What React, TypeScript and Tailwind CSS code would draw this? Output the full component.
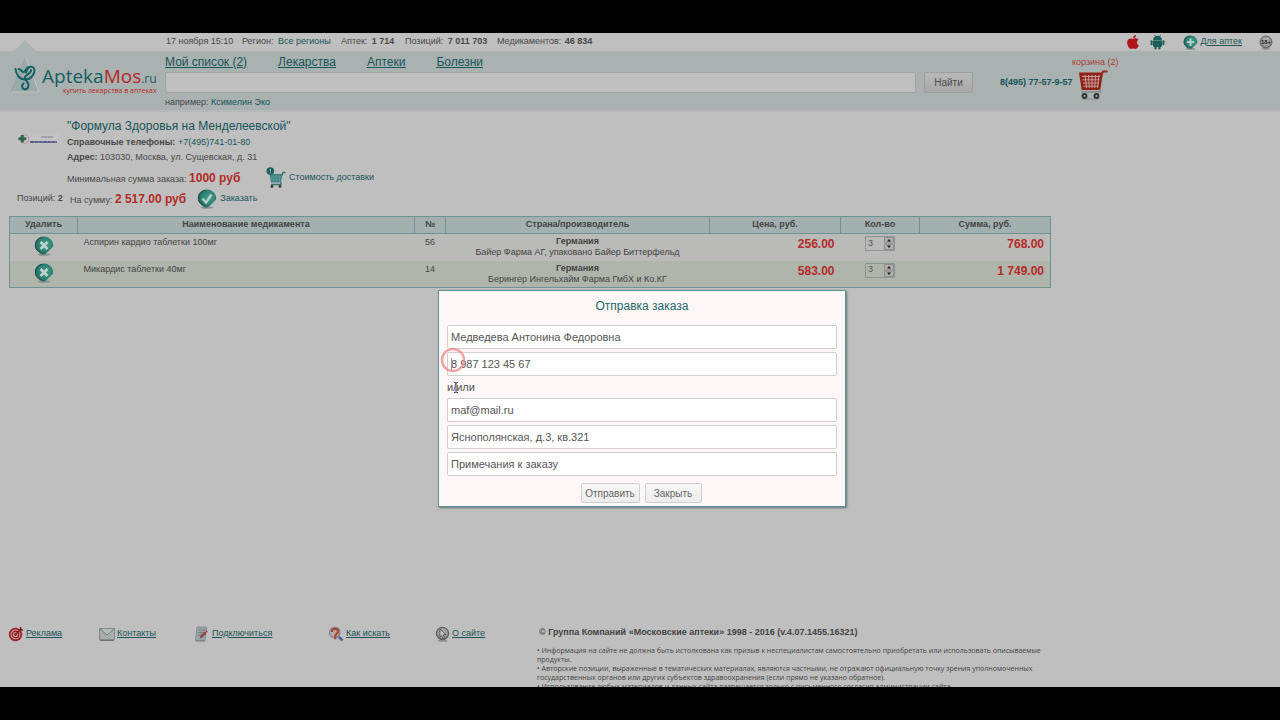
import { useState, type ReactNode } from "react";
import { FaApple } from "react-icons/fa";

interface OrderItem {
  id: number;
  name: string;
  num: number;
  country: string;
  maker: string;
  price: string;
  qty: number;
  sum: string;
}

const ITEMS: OrderItem[] = [
  {
    id: 1,
    name: "Аспирин кардио таблетки 100мг",
    num: 56,
    country: "Германия",
    maker: "Байер Фарма АГ, упаковано Байер Биттерфельд",
    price: "256.00",
    qty: 3,
    sum: "768.00",
  },
  {
    id: 2,
    name: "Микардис таблетки 40мг",
    num: 14,
    country: "Германия",
    maker: "Берингер Ингельхайм Фарма ГмбХ и Ко.КГ",
    price: "583.00",
    qty: 3,
    sum: "1 749.00",
  },
];

function Gradients() {
  return (
    <svg width="0" height="0" className="absolute" aria-hidden="true">
      <defs>
        <radialGradient id="teal" cx="0.6" cy="0.45" r="0.65">
          <stop offset="0" stopColor="#46a08a" />
          <stop offset="0.7" stopColor="#277b6e" />
          <stop offset="1" stopColor="#1c5552" />
        </radialGradient>
        <radialGradient id="steel" cx="0.5" cy="0.45" r="0.6">
          <stop offset="0" stopColor="#bcbcbc" />
          <stop offset="0.65" stopColor="#999" />
          <stop offset="1" stopColor="#444" />
        </radialGradient>
      </defs>
    </svg>
  );
}

function RoundIcon({ size, children }: { size: number; children: ReactNode }) {
  return (
    <svg width={size} height={size} viewBox="0 0 20 20" className="shrink-0" aria-hidden="true">
      <ellipse cx="10" cy="18.6" rx="6.500" ry="1.200" fill="#8b8f8f" />
      <path d="M10 .6C4.800.6.900 4.400.900 9.200c0 4.200 3.600 7.200 7.600 9.200 1.200.2 2.300 0 3.500-.8L19.200 10.500C19.600 5 15.200.6 10 .6z" fill="url(#teal)" />
      <path d="M8.500 1.200C4 2.100 1.400 5.300 1.400 9.300c0 3.400 2.400 6 5.400 7.600" fill="none" stroke="#2c4a4c" strokeWidth="1" />
      {children}
    </svg>
  );
}

function LogoMark() {
  return (
    <svg width="32" height="39" viewBox="0 0 32 39" className="shrink-0" aria-hidden="true">
      <path d="M16.500 2 30 37H2z" fill="#9baaaa" />
      <path d="M16.500 2 2 37" stroke="#8fa2a2" />
      <path d="M2 37h28L16.500 2" fill="none" stroke="#bfc6c6" />
      <path
        d="M6.500 14c.5 6 4.500 10.500 9.500 10.500 6 0 9.500-5 9.500-9 0-3-2.500-4.500-5-3.500-2.500.8-3 3.500-3.500 5.500"
        fill="none"
        stroke="#125f63"
        strokeWidth="2"
        strokeLinecap="round"
      />
      <path
        d="M9.500 14c2.500.3 3 2.500 4.500 3 2.500.5 2.500-3.500 5-4.500M22 15c1 3-4.500 4-6 7-1 2.500 3.500 4.500 3.500 8.500 0 3-2.500 4.200-4.200 3.700-2.600-.7-2.900-4.200-.8-5.700"
        fill="none"
        stroke="#125f63"
        strokeWidth="2"
        strokeLinecap="round"
      />
    </svg>
  );
}

function AndroidIcon() {
  return (
    <svg width="15" height="16" viewBox="0 0 15 16" fill="#1a5f59" aria-hidden="true">
      <path d="M3 6.200C3 3.400 5 1.800 7.500 1.800S12 3.400 12 6.200z" />
      <path d="M4.300.7 5.800 3M10.700.7 9.200 3" stroke="#1a5f59" strokeWidth=".8" />
      <path d="M3 6.500h9v5c0 .8-.5 1.500-1.300 1.500H4.300C3.500 13 3 12.300 3 11.500z" />
      <rect x=".6" y="6.200" width="2" height="5" rx="1" />
      <rect x="12.400" y="6.200" width="2" height="5" rx="1" />
      <rect x="4.500" y="11.500" width="2.200" height="4" rx="1" />
      <rect x="8.300" y="11.500" width="2.200" height="4" rx="1" />
    </svg>
  );
}

function RedCart() {
  return (
    <svg width="29" height="31" viewBox="0 0 29 31" className="shrink-0" aria-hidden="true">
      <path d="M1 3.500h22L20.500 19H3.500z" fill="#96261c" />
      <path d="M3 6.500h18M3.500 9.800h17M4 13.100h16M4.500 16.200h15M6 5l1.500 13M9.500 5l.8 13M13 5v13M16.500 5l-.8 13M20 5l-1.500 13" stroke="#c4a7a2" strokeWidth=".9" />
      <path d="M1 3.500h22L20.500 19H3.500z" fill="none" stroke="#8f2117" strokeWidth="1.800" />
      <path d="M22 5.500 24 1.500h4.500" fill="none" stroke="#a3231b" strokeWidth="2" />
      <path d="M21 19v3H2.500" fill="none" stroke="#8b8b8b" strokeWidth="1.500" />
      <ellipse cx="12" cy="29" rx="9" ry="1.300" fill="#999f9f" />
      <circle cx="5.500" cy="26" r="2.900" fill="#333" />
      <circle cx="17.500" cy="26" r="2.900" fill="#333" />
      <circle cx="5.500" cy="26" r="1" fill="#aaa" />
      <circle cx="17.500" cy="26" r="1" fill="#aaa" />
    </svg>
  );
}

function TealCart() {
  return (
    <svg width="20" height="22" viewBox="0 0 20 22" className="shrink-0" aria-hidden="true">
      <path d="M3.500 7h13L15 15.500H5z" fill="#3d8583" />
      <path d="M4 9.800h12M4.500 12.300h11M7.500 8v7M10.500 8v7M13.500 8v7" stroke="#6b9d9b" strokeWidth=".6" />
      <path d="M16 8.500 17 5.500h2.500M15 15v2.500H5" fill="none" stroke="#39716f" strokeWidth="1.400" />
      <circle cx="6" cy="19.500" r="1.400" fill="#4a3333" />
      <circle cx="14" cy="19.500" r="1.400" fill="#4a3333" />
      <circle cx="4.300" cy="4" r="3.800" fill="#1e5f5e" />
      <path d="M4.300 2v2.600M4.300 5.500v.9" stroke="#b5cccb" strokeWidth="1" />
    </svg>
  );
}

function PharmacyLogo() {
  return (
    <svg width="41" height="14" viewBox="0 0 41 14" aria-hidden="true">
      <path d="M0 .5h41v11H0z" fill="#c3c3c3" />
      <circle cx="7.500" cy="6" r="4.300" fill="none" stroke="#b58d98" strokeWidth="1" />
      <path d="M3.800 2h3v2.200h2.400v3H6.800v2.200h-3V7.200H1.400v-3h2.400z" fill="#2f6650" />
      <path d="M24 4h12" stroke="#7b7b9b" strokeWidth="1.200" strokeDasharray="3 .3" />
      <path d="M13 9h27" stroke="#5c5c90" strokeWidth="1.800" strokeDasharray="4 .3" />
    </svg>
  );
}

function TargetIcon() {
  return (
    <svg width="16" height="16" viewBox="0 0 16 16" aria-hidden="true">
      <circle cx="7.500" cy="8.500" r="6.700" fill="#9c1f24" />
      <circle cx="7.500" cy="8.500" r="4.500" fill="none" stroke="#c2a5a5" strokeWidth="1.100" />
      <circle cx="7.500" cy="8.500" r="2" fill="none" stroke="#c2a5a5" strokeWidth="1.100" />
      <path d="m7.500 8.500 6-6M12.500 1v3H15" fill="none" stroke="#7d191d" strokeWidth="1.300" />
    </svg>
  );
}

function MailIcon() {
  return (
    <svg width="16" height="16" viewBox="0 0 16 16" aria-hidden="true">
      <rect x=".5" y="2.500" width="15" height="11" fill="#a7adab" stroke="#838987" />
      <path d="m1 3 7 6 7-6" fill="#b7bcba" stroke="#727a77" />
      <path d="M1 14.500h14" stroke="#6c7371" />
    </svg>
  );
}

function NoteIcon() {
  return (
    <svg width="16" height="16" viewBox="0 0 16 16" aria-hidden="true">
      <path d="M3 1h9.500L11 14.500H1.500z" fill="#9aa3a8" stroke="#7d868b" strokeWidth=".8" />
      <path d="M4.500 4h6M4.200 6.500h4.500M4 9h3" stroke="#6b747a" strokeWidth=".8" />
      <path d="m5.500 12.500 1-3L12 4l2 1.800-5.700 5.700z" fill="#8d4a44" />
      <path d="m11 5 2 1.800" stroke="#c79b94" />
      <path d="M2 15h9" stroke="#777" />
    </svg>
  );
}

function SearchHelpIcon() {
  return (
    <svg width="16" height="16" viewBox="0 0 16 16" aria-hidden="true">
      <path d="m9.500 9.500 5 5" stroke="#5563a0" strokeWidth="2.600" />
      <circle cx="6.800" cy="6.500" r="5.300" fill="#b4aaa8" stroke="#8286a0" strokeWidth="1.300" />
      <path d="M4 6C3.800 3.800 5.300 2.800 7 2.800c2 0 3.300 1.200 3 3C9.700 7.700 7.500 8 7.200 10.500v2.800" fill="none" stroke="#a5452b" strokeWidth="2.200" />
    </svg>
  );
}

function AboutIcon() {
  return (
    <svg width="15" height="16" viewBox="0 0 15 16" aria-hidden="true">
      <ellipse cx="7.500" cy="14.800" rx="5" ry="1" fill="#8f8f8f" />
      <circle cx="7.500" cy="7.500" r="6.200" fill="url(#steel)" stroke="#555" strokeWidth="1" />
      <path d="m5 3 6 5.500-3 .3 1.500 3-1.500.7-1.400-3L4.800 11z" fill="#c5c5c5" stroke="#444" strokeWidth=".8" />
    </svg>
  );
}

const FOOTER_LINKS = [
  { label: "Реклама", icon: <TargetIcon />, width: "w-[91px]" },
  { label: "Контакты", icon: <MailIcon />, width: "w-[95px]" },
  { label: "Подключиться", icon: <NoteIcon />, width: "w-[134px]" },
  { label: "Как искать", icon: <SearchHelpIcon />, width: "w-[107px]" },
  { label: "О сайте", icon: <AboutIcon />, width: "w-[102px]" },
];

function TopBar() {
  return (
    <div className="flex h-[18px] items-center pr-[7px] pl-[166px] text-[9px] text-[#484848]">
      <span className="w-[76px]">17 ноября 15:10</span>
      <span className="w-[36px]">Регион:</span>
      <a href="#regions" className="w-[63px] text-[#1b5558]">Все регионы</a>
      <span className="w-[64px]">Аптек: <b className="ml-[2px]">1 714</b></span>
      <span className="w-[92px]">Позиций: <b className="ml-[2px]">7 011 703</b></span>
      <span>Медикаментов: <b className="ml-px">46 834</b></span>
      <div className="ml-auto flex items-center">
        <a href="#ios" aria-label="App Store" className="mr-[9px]"><FaApple size={16} color="#b3151b" /></a>
        <a href="#android" aria-label="Google Play" className="mr-[18px]"><AndroidIcon /></a>
        <a href="#partners" className="mr-[17px] flex items-center gap-[2px] text-[#1b5558] underline">
          <RoundIcon size={15}>
            <path d="M10 4.500v10M5 9.500h10" stroke="#bcd0cc" strokeWidth="2.600" />
          </RoundIcon>
          Для аптек
        </a>
        <svg width="14" height="15" viewBox="0 0 14 15" role="img" aria-label="18+">
          <ellipse cx="7" cy="13.800" rx="4.500" ry=".9" fill="#909090" />
          <circle cx="7" cy="7" r="6" fill="url(#steel)" stroke="#666" strokeWidth="1" />
          <text x="7" y="9.300" textAnchor="middle" fontSize="6" fontWeight="bold" fontFamily="Liberation Sans" fill="#222">18+</text>
        </svg>
      </div>
    </div>
  );
}

function Header() {
  return (
    <header>
      <TopBar />
      <div className="relative flex h-[61px] border-b-2 border-[#b5b8b8] bg-[#a9b1b1]">
        <svg width="22" height="11" viewBox="0 0 22 11" className="absolute -top-[11px] left-[14px]" aria-hidden="true">
          <path d="M11 0 22 11H0z" fill="#a9b1b1" />
        </svg>
        <a href="#home" className="flex w-[165px] shrink-0 pt-[4px] pl-[9px]">
          <LogoMark />
          <span className="flex flex-col font-['Open_Sans',sans-serif]">
            <span className="pt-[10px] pl-[1px] text-[19px] leading-[22px] font-medium whitespace-nowrap text-[#125f63]">
              Apteka<span className="text-[#b52a26]">Mos</span><span className="text-[12px]">.ru</span>
            </span>
            <span className="-mt-[3px] self-end text-[7px] leading-[8px] font-medium whitespace-nowrap text-[#b52a26]">
              купить лекарства в аптеках
            </span>
          </span>
        </a>
        <div className="min-w-0 flex-1">
          <nav className="flex h-[21px] items-center gap-[31px] text-[12px] text-[#165558] underline">
            <a href="#list">Мой список (2)</a>
            <a href="#drugs">Лекарства</a>
            <a href="#pharmacies">Аптеки</a>
            <a href="#diseases">Болезни</a>
          </nav>
          <form className="flex gap-2" onSubmit={(e) => e.preventDefault()}>
            <input
              type="search"
              aria-label="Поиск лекарства"
              className="h-[21px] min-w-0 flex-1 rounded-xs border border-[#9fa5a5] bg-[#bfbfbf] px-1 text-[11px] outline-none"
            />
            <button className="h-[21px] w-[49px] rounded-xs border border-[#9a9f9f] bg-linear-to-b from-[#b9b9b9] to-[#a8a8a8] text-[10px] text-[#4d4d4d]">
              Найти
            </button>
          </form>
          <p className="pt-[3px] text-[9px] leading-[12px] text-[#484848]">
            например: <a href="#example" className="text-[#165558]">Ксимелин Эко</a>
          </p>
        </div>
        <div className="flex w-[307px] shrink-0">
          <a href="tel:+74957757957" className="w-[98px] pt-[25px] pl-[27px] text-[9px] leading-[12px] font-bold whitespace-nowrap text-[#165558]">
            8(495) 77-57-9-57
          </a>
          <a href="#cart" className="flex flex-col items-start pl-[1px] text-[9px] leading-[12px] text-[#ac3c37]">
            <span className="pt-[5px] pb-[2px]">корзина (2)</span>
            <span className="pl-[7px]"><RedCart /></span>
          </a>
        </div>
      </div>
    </header>
  );
}

function PharmacyInfo() {
  return (
    <section className="pt-[5px] text-[9px] text-[#484848]">
      <div className="flex pl-[17px]">
        <div className="w-[50px] shrink-0 pt-[16px]"><PharmacyLogo /></div>
        <div>
          <h1 className="text-[12px] leading-[18px] text-[#165558]">"Формула Здоровья на Менделеевской"</h1>
          <p className="leading-[15px]">
            <b>Справочные телефоны:</b> <a href="tel:+74957410180" className="text-[#165558]">+7(495)741-01-80</a>
          </p>
          <p className="leading-[15px]"><b>Адрес:</b> 103030, Москва, ул. Сущевская, д. 31</p>
          <div className="flex h-[26px] items-center">
            <p className="w-[199px]">
              Минимальная сумма заказа: <b className="text-[12px] text-[#b32b27]">1000 руб</b>
            </p>
            <a href="#delivery" className="flex items-center gap-[3px] text-[#165558]">
              <TealCart />
              Стоимость доставки
            </a>
          </div>
        </div>
      </div>
      <div className="flex h-[16px] items-center pl-[17px]">
        <span className="w-[53px]">Позиций: <b>2</b></span>
        <span>На сумму: <b className="text-[12px] text-[#b32b27]">2 517.00 руб</b></span>
        <button className="ml-[11px] flex items-center gap-[3px] text-[#165558]">
          <RoundIcon size={20}>
            <path d="m5.500 9.500 3.500 4 5.500-8" fill="none" stroke="#b9cdc8" strokeWidth="2.400" />
          </RoundIcon>
          Заказать
        </button>
      </div>
    </section>
  );
}

function OrderTable() {
  const th = "border border-[#6d9494] font-bold";
  return (
    <table className="mt-[9px] w-full table-fixed border-collapse border border-[#6d9494] text-[9px] text-[#444]">
      <colgroup>
        <col className="w-[68px]" />
        <col />
        <col className="w-[31px]" />
        <col className="w-[264px]" />
        <col className="w-[131px]" />
        <col className="w-[79px]" />
        <col className="w-[131px]" />
      </colgroup>
      <thead>
        <tr className="h-[17px] bg-[#a2b0b0]">
          <th className={th}>Удалить</th>
          <th className={th}>Наименование медикамента</th>
          <th className={th}>№</th>
          <th className={th}>Страна/производитель</th>
          <th className={th}>Цена, руб.</th>
          <th className={th}>Кол-во</th>
          <th className={th}>Сумма, руб.</th>
        </tr>
      </thead>
      <tbody>
        {ITEMS.map((item) => (
          <tr key={item.id} className="h-[27px] bg-[#babab8] align-top even:bg-[#b0b5ab]">
            <td className="pt-[2px]">
              <button aria-label={`Удалить ${item.name}`} className="mx-auto block">
                <RoundIcon size={20}>
                  <path d="m6.500 6 7 7m0-7-7 7" stroke="#bfd2ce" strokeWidth="2.500" />
                </RoundIcon>
              </button>
            </td>
            <td className="pt-[2px] pl-[6px] leading-[12px]">{item.name}</td>
            <td className="pt-[2px] text-center leading-[12px]">{item.num}</td>
            <td className="pt-[2px] text-center leading-[11px]">
              <b>{item.country}</b>
              <br />
              {item.maker}
            </td>
            <td className="pt-[2px] pr-[6px] text-right text-[12px] leading-[16px] font-bold text-[#b32b27]">{item.price}</td>
            <td className="pt-[2px]">
              <div className="mx-auto flex h-[15px] w-[30px] border border-[#8f9494]">
                <input
                  aria-label={`Количество: ${item.name}`}
                  defaultValue={item.qty}
                  className="w-[18px] bg-transparent pl-[2px] text-[9px] text-[#555] outline-none"
                />
                <svg width="10" height="13" viewBox="0 0 10 13" aria-hidden="true">
                  <path d="M.5.500h9v5.500h-9zM.5 7h9v5.500h-9z" fill="#b0b0b0" stroke="#8d8d8d" />
                  <path d="M5 2 7 4.500H3zM5 11 7 8.500H3z" fill="#1a1a1a" />
                </svg>
              </div>
            </td>
            <td className="pt-[2px] pr-[6px] text-right text-[12px] leading-[16px] font-bold text-[#b32b27]">{item.sum}</td>
          </tr>
        ))}
      </tbody>
    </table>
  );
}

function OrderDialog() {
  const [name, setName] = useState("Медведева Антонина Федоровна");
  const [phone, setPhone] = useState("8 987 123 45 67");
  const [email, setEmail] = useState("maf@mail.ru");
  const [address, setAddress] = useState("Яснополянская, д.3, кв.321");
  const field =
    "block h-[24px] w-full rounded-xs border border-[#cfcfcf] bg-white px-[3px] text-[11px] text-[#555] outline-none placeholder:text-[#555]";
  const button =
    "h-[20px] rounded-xs border border-[#cfcfcf] bg-linear-to-b from-[#f8f8f8] to-[#ececec] text-[10px] text-[#666]";

  return (
    <div className="absolute inset-x-0 top-[257px] flex justify-center pl-[4px]">
      <form
        role="dialog"
        aria-labelledby="order-title"
        onSubmit={(e) => e.preventDefault()}
        className="relative w-[408px] border border-[#5f9192] bg-[#fdf7f7] px-2 pb-[3px] text-[#555] shadow-[1px_1px_2px_#5f7778]"
      >
        <h2 id="order-title" className="pt-[6px] pb-[10px] text-center text-[12px] leading-[18px] text-[#24686c]">
          Отправка заказа
        </h2>
        <div className="space-y-[3px]">
          <input aria-label="Имя" className={field} value={name} onChange={(e) => setName(e.target.value)} />
          <input aria-label="Телефон" className={field} value={phone} onChange={(e) => setPhone(e.target.value)} />
        </div>
        <p className="py-[3px] text-[11px] leading-[16px]">и/или</p>
        <div className="space-y-[3px]">
          <input aria-label="E-mail" className={field} value={email} onChange={(e) => setEmail(e.target.value)} />
          <input aria-label="Адрес" className={field} value={address} onChange={(e) => setAddress(e.target.value)} />
          <input aria-label="Примечания к заказу" className={field} placeholder="Примечания к заказу" />
        </div>
        <div className="flex justify-center gap-[5px] pt-[7px] pr-[2px]">
          <button type="submit" className={`${button} w-[59px]`}>Отправить</button>
          <button type="button" className={`${button} w-[57px]`}>Закрыть</button>
        </div>
        {/* click ring, caret and text cursor */}
        <svg width="30" height="50" viewBox="0 0 30 50" className="pointer-events-none absolute top-[56px] left-[1px]" aria-hidden="true">
          <circle cx="13" cy="13" r="11" fill="none" stroke="#ef8a8a" strokeOpacity=".75" strokeWidth="2.500" />
          <path d="M11.500 11v13" stroke="#999" />
          <path d="M14 35.500h1.500l.5.500.5-.5H18M16 36v9M14 45.500h1.500l.5-.5.5.500H18" fill="none" stroke="#444" />
        </svg>
      </form>
    </div>
  );
}

function Footer() {
  return (
    <footer className="mt-auto flex h-[61px] overflow-hidden pl-2 text-[#444]">
      <nav className="flex w-[529px] shrink-0 items-start text-[9px] text-[#1d5356] underline">
        {FOOTER_LINKS.map((link) => (
          <a key={link.label} href="#" className={`flex items-center gap-[2px] ${link.width}`}>
            {link.icon}
            {link.label}
          </a>
        ))}
      </nav>
      <div className="w-[505px]">
        <p className="pb-[8px] pl-[2px] text-[9px] leading-[12px] font-bold">
          © Группа Компаний «Московские аптеки» 1998 - 2016 (v.4.07.1455.16321)
        </p>
        <div className="font-['Open_Sans',sans-serif] text-[7px] leading-[9px]">
          <p>• Информация на сайте не должна быть истолкована как призыв к неспециалистам самостоятельно приобретать или использовать описываемые продукты.</p>
          <p>• Авторские позиции, выраженные в тематических материалах, являются частными, не отражают официальную точку зрения уполномоченных государственных органов или других субъектов здравоохранения (если прямо не указано обратное).</p>
          <p>• Использование любых материалов и данных сайта разрешается только с письменного согласия администрации сайта.</p>
        </div>
      </div>
    </footer>
  );
}

export default function App() {
  return (
    <div className="h-screen bg-black py-[33px] font-['Liberation_Sans',Arial,sans-serif]">
      <Gradients />
      <div className="relative flex h-full flex-col overflow-hidden bg-[#bfbfbf]">
        <Header />
        <PharmacyInfo />
        <div className="pr-[229px] pl-[9px]">
          <OrderTable />
        </div>
        <Footer />
        <OrderDialog />
      </div>
    </div>
  );
}
